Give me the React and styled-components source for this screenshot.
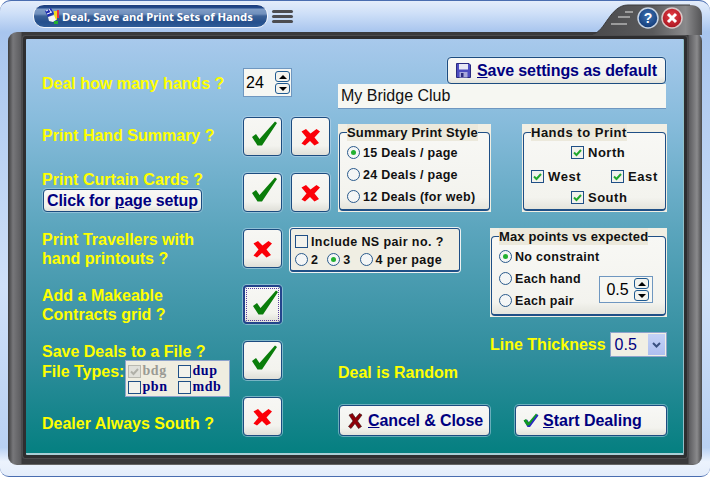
import React from "react";
import styled, { createGlobalStyle } from "styled-components";

const Global = createGlobalStyle`
  html, body { margin: 0; padding: 0; background: #fff; }
  body { font-family: "Liberation Sans", Arial, sans-serif; }
`;

const Win = styled.div`
  position: relative;
  box-sizing: border-box;
  width: 710px;
  height: 477px;
  overflow: hidden;
  border-radius: 11px 11px 9px 9px;
  border-top: 1px solid #4a6db0;
  border-bottom: 1px solid #4a6db0;
  background: linear-gradient(#e4edfb 0, #cfe0f8 12px, #a8c5ee 31px, #cfe0f8 60%, #b9d1f3 94%, #ecf3fd 97%, #e4edfb 100%);
  padding: 0 8px 0 8px;
`;

const TitleBar = styled.div`
  display: flex;
  align-items: flex-start;
  height: 31px;
  padding-left: 25px;
`;

const Pill = styled.div`
  box-sizing: border-box;
  display: flex;
  align-items: center;
  gap: 1px;
  width: 235px;
  height: 24px;
  margin-top: 3px;
  padding: 0 0 0 11px;
  border: 1px solid #f2f6fd;
  border-radius: 11px;
  background: linear-gradient(#1c3c7c 0, #234a8c 3px, #7f9cc6 4px, #6f8fbc 9px, #3c6298 11px, #254f8c 17px, #2f5c98 22px);
`;

const PillText = styled.span`
  font: bold 11.25px "Noto Sans", sans-serif;
  letter-spacing: 0;
  color: #fff;
  white-space: nowrap;
`;

const Grip = styled.div`
  display: flex;
  flex-direction: column;
  gap: 2px;
  width: 21px;
  margin: 9px 0 0 4px;
`;

const GripBar = styled.div`
  height: 3px;
  border-radius: 2px;
  background: #4c4c50;
`;

const Notch = styled.svg`
  position: absolute;
  right: 0;
  top: 0;
`;

const Bezel = styled.div`
  box-sizing: border-box;
  height: 433px;
  padding: 7px 18px 9px 18px;
  border-radius: 9px;
  border-bottom: 1px solid #666;
  background: linear-gradient(90deg, #3c3c3e 0, #77777a 5px, #5c5c5f 13px, #3a3a3c 14px, #3a3a3c 680px, #5c5c5f 681px, #8a8a8c 689px, #4a4a4c 694px);
`;

const Panel = styled.div`
  box-sizing: border-box;
  position: relative;
  height: 416px;
  padding: 18px 0 0 16px;
  box-shadow: 0 0 0 3px #2e2e30, 0 0 0 4px #4c4c4e;
  border-radius: 1px;
  border-bottom: 2px solid #a9cfd6;
  border-right: 1px solid #8fc0c8;
  background: linear-gradient(#a8c9ec 0, #88bcdc 80px, #5ba5bd 190px, #2f8d9c 320px, #047f80 416px);
  display: grid;
  grid-template-columns: 201px 48px 47px 152px 177px;
  grid-template-rows: 60px 56px 56px 56px 56px 56px 39px;
`;

const Cell = styled.div`
  grid-column: ${(p) => p.$col};
  grid-row: ${(p) => p.$row};
  min-width: 0;
  justify-self: ${(p) => p.$justify || "stretch"};
`;

const Label = styled.div`
  font-weight: bold;
  font-size: 16px;
  line-height: ${(p) => p.$lh || 20}px;
  color: #ffff00;
  white-space: nowrap;
  margin-top: ${(p) => p.$top || 0}px;
`;

const Square = styled.button`
  box-sizing: border-box;
  width: 39px;
  height: 39px;
  padding: 0;
  display: block;
  background: linear-gradient(#f7f7f4 0, #f3f3ee 75%, #dfdfd8 100%);
  border: ${(p) => (p.$focus ? "2px solid #24448c" : "1px solid #1c4c80")};
  border-radius: 4px;
  box-shadow: 0 0 0 1px rgba(190, 215, 235, 0.55);
  outline: ${(p) => (p.$focus ? "1px dotted #5a3fa0" : "none")};
  outline-offset: -4px;
`;

const Check = () => (
  <svg width="37" height="37" viewBox="0 0 37 37" style={{ display: "block" }}>
    <path d="M8 19 L12 16 L15.5 21 L31 3.5 L33 5 L18 27.5 L13.5 27.5 Z" fill="#0a7d0a" />
  </svg>
);

const Cross = () => (
  <svg width="37" height="37" viewBox="0 0 37 37" style={{ display: "block" }}>
    <path d="M9.5 13.5 L14 11 L18.5 15.5 L24.5 11 L28 13.5 L22.5 19.5 L27 25 L22.5 27.5 L18 23 L13 27.5 L9.5 25.5 L14.5 19.5 Z" fill="#fb0008" />
  </svg>
);

const Spin = styled.div`
  box-sizing: border-box;
  display: flex;
  align-items: center;
  justify-content: space-between;
  width: ${(p) => p.$w}px;
  height: ${(p) => p.$h}px;
  margin-top: ${(p) => p.$top || 0}px;
  margin-bottom: ${(p) => p.$bottom || 0}px;
  padding: 0 1px 0 ${(p) => p.$pad}px;
  background: #f6f7f3;
  border: 1px solid #6f97c0;
  font-size: 16px;
  color: #000;
`;

const SpinBtns = styled.div`
  display: flex;
  flex-direction: column;
  gap: 1px;
  margin-right: ${(p) => p.$mr || 0}px;
`;

const SpinBtn = styled.div`
  box-sizing: border-box;
  width: 15px;
  height: 11px;
  display: flex;
  align-items: center;
  justify-content: center;
  background: #f3f3ee;
  border: 1px solid #1f5a90;
  border-radius: 3px;
`;

const Tri = styled.div`
  width: 0;
  height: 0;
  border-left: 4px solid transparent;
  border-right: 4px solid transparent;
  ${(p) => (p.$down ? "border-top: 4px solid #000;" : "border-bottom: 4px solid #000;")}
`;

const RightStack = styled.div`
  display: flex;
  flex-direction: column;
  align-items: flex-end;
  padding-right: 1px;
`;

const ActionBtn = styled.button`
  box-sizing: border-box;
  display: flex;
  align-items: center;
  gap: ${(p) => p.$gap || 5}px;
  width: ${(p) => p.$w}px;
  height: ${(p) => p.$h}px;
  padding: 0 0 0 ${(p) => p.$pad || 8}px;
  font: bold 16px "Liberation Sans", sans-serif;
  letter-spacing: ${(p) => p.$ls ?? -0.1}px;
  color: #000080;
  white-space: nowrap;
  background: linear-gradient(#f8f8f6 0, #f3f3ee 75%, #e2e2da 100%);
  border: 1px solid #1c4c80;
  border-radius: 4px;
  box-shadow: 0 0 0 1px rgba(190, 215, 235, 0.5);
  margin: ${(p) => p.$margin || 0};
`;

const U = styled.span`
  text-decoration: underline;
`;

const TextField = styled.div`
  box-sizing: border-box;
  width: 328px;
  height: 25px;
  padding: 0 3px;
  line-height: 24px;
  font-size: 16px;
  background: #f6f7f2;
  border-bottom: 1px solid #6f97c0;
  color: #111;
`;

const GroupWrap = styled.div`
  box-sizing: border-box;
  width: ${(p) => p.$w}px;
  height: ${(p) => p.$h}px;
  margin-top: ${(p) => p.$top || 0}px;
  background: #f1efe4;
  padding: 0 1px 1px 1px;
`;

const Fieldset = styled.fieldset`
  box-sizing: border-box;
  height: 100%;
  min-width: 0;
  margin: 0;
  padding: 0 0 0 7px;
  border: 1px solid #1f4f86;
  border-bottom-width: 2px;
  border-radius: 4px;
  background: linear-gradient(#f8f8f5 0, #f3f3ee 85%, #e4e4dc 100%);
`;

const Legend = styled.legend`
  padding: 0;
  margin-left: 0;
  font: bold 13px/17px "Liberation Sans", sans-serif;
  letter-spacing: ${(p) => p.$ls ?? 0.2}px;
  color: #111;
  background: #ece9dc;
`;

const Opt = styled.div`
  display: flex;
  align-items: center;
  gap: ${(p) => p.$gap || 3}px;
  height: 15px;
  font: bold ${(p) => p.$size || 12.5}px "Liberation Sans", sans-serif;
  letter-spacing: ${(p) => p.$ls ?? 0.3}px;
  color: #111;
  white-space: nowrap;
  grid-column: ${(p) => p.$col || "auto"};
`;

const Radio = styled.span`
  box-sizing: border-box;
  flex: none;
  width: 13px;
  height: 13px;
  display: flex;
  align-items: center;
  justify-content: center;
  border: 1px solid #2a5a8c;
  border-radius: 50%;
  background: #f4f6f6;
  &::after {
    content: "";
    width: 5px;
    height: 5px;
    border-radius: 50%;
    background: ${(p) => (p.$on ? "#22b030" : "transparent")};
  }
`;

const Box = styled.span`
  box-sizing: border-box;
  flex: none;
  display: block;
  width: 13px;
  height: 13px;
  border: 1px solid ${(p) => (p.$gray ? "#b8b8b0" : "#1f4f86")};
  background: ${(p) => (p.$gray ? "#e0e0da" : "#f2f2ec")};
`;

const Tick = ({ color = "#22a82c" }) => (
  <svg width="11" height="11" viewBox="0 0 11 11" style={{ display: "block" }}>
    <path d="M2 5.5 L4.5 8 L9 3" fill="none" stroke={color} strokeWidth="2" />
  </svg>
);

const RadioCol = styled.div`
  display: flex;
  flex-direction: column;
  gap: 7px;
  margin-top: 4px;
`;

const HandsGrid = styled.div`
  display: grid;
  grid-template-columns: 40px 40px 1fr;
  grid-template-rows: 24px 21px 15px;
  margin-top: 4px;
`;

const NsBox = styled.div`
  box-sizing: border-box;
  width: 170px;
  height: 44px;
  margin: -1px 0 0 -1px;
  padding: 5px 0 0 4px;
  background: #f0eee3;
  border: 1px solid #1f4f86;
  border-bottom-width: 2px;
  border-radius: 3px;
  box-shadow: 0 0 0 1px #eef2f2;
  display: flex;
  flex-direction: column;
  gap: 3px;
`;

const NsRow = styled.div`
  display: flex;
  align-items: center;
  gap: 9px;
`;

const RightCol = styled.div`
  display: flex;
  flex-direction: column;
  align-items: flex-start;
`;

const MaxBody = styled.div`
  display: flex;
  justify-content: space-between;
  align-items: flex-end;
  padding-right: 12px;
`;

const LineRow = styled.div`
  display: flex;
  align-items: center;
  gap: 4px;
  margin-top: 15px;
`;

const Combo = styled.div`
  box-sizing: border-box;
  display: flex;
  align-items: center;
  justify-content: space-between;
  width: 57px;
  height: 25px;
  padding: 1px 1px 1px 4px;
  border: 1px solid #8da4cc;
  background: #f1efe4;
  font-size: 16px;
  color: #000080;
`;

const ComboArrow = styled.div`
  width: 17px;
  height: 21px;
  display: flex;
  align-items: center;
  justify-content: center;
  background: linear-gradient(#c4d2f6, #aebff0);
`;

const FileRow = styled.div`
  display: flex;
  align-items: flex-start;
  margin-top: -2px;
`;

const FileBox = styled.div`
  box-sizing: border-box;
  width: 105px;
  height: 37px;
  margin-left: 1px;
  padding: 2px 0 0 2px;
  background: #efede0;
  border: 1px solid #8da4cc;
  display: grid;
  grid-template-columns: 50px 50px;
  grid-auto-rows: 16px;
`;

const FileOpt = styled.div`
  display: flex;
  align-items: center;
  gap: 1px;
  font: bold 14px "Liberation Serif", serif;
  letter-spacing: 0.6px;
  color: ${(p) => (p.$gray ? "#9a9a94" : "#000080")};
`;

const EndCell = styled(Cell)`
  display: flex;
  justify-content: ${(p) => p.$end || "flex-start"};
  align-items: flex-end;
`;

const Floppy = () => (
  <svg width="15" height="15" viewBox="0 0 15 15" style={{ display: "block" }}>
    <path d="M0.5 0.5 H13 L14.5 2 V14.5 H0.5 Z" fill="#4c4cc0" stroke="#2a2a80" />
    <rect x="3" y="1" width="9" height="5.5" fill="#e8e8f4" />
    <rect x="3.5" y="9" width="8" height="5.5" fill="#a8a8dc" />
    <rect x="5" y="10" width="2.5" height="4" fill="#2a2a80" />
  </svg>
);

const SmallCross = () => (
  <svg width="15" height="16" viewBox="0 0 15 16" style={{ display: "block" }}>
    <path d="M1 2 L4.5 0.5 L7.5 5 L11.5 0.5 L14 2 L9.5 8 L13.5 13.5 L10.5 15.5 L7 10.5 L3 15.5 L0.5 13.5 L5 8 Z" fill="#900008" stroke="#301010" strokeWidth="0.6" />
  </svg>
);

const SmallCheck = () => (
  <svg width="16" height="15" viewBox="0 0 16 15" style={{ display: "block" }}>
    <path d="M1 8 L4 6.5 L6.5 10 L14 1 L15.5 2.5 L7 14 L4.5 14 Z" fill="#2a2ac0" />
    <path d="M0.5 7.5 L3 6 L5.5 9.5 L13 0.5 L14 1.5 L6 12.5 L4 12.5 Z" fill="#109a20" />
  </svg>
);

const TitleIcon = () => (
  <svg width="16" height="17" viewBox="0 0 16 17" style={{ display: "block", flex: "none" }}>
    <path d="M0 3 L6 0 L9 6 L3 9 Z" fill="#2030b0" />
    <path d="M1 3 L3 2 M4 1 L6 4 M2 6 L7 4" stroke="#fff" />
    <rect x="9" y="3" width="3" height="9" fill="#f0d820" />
    <rect x="12" y="2" width="2" height="8" fill="#e83048" />
    <path d="M3 9 L9 7 L11 12 L8 14 L4 13 Z" fill="#f4f4f4" />
    <rect x="9" y="13" width="4" height="3" fill="#20b030" />
  </svg>
);

const ChromeControls = () => (
  <Notch width="120" height="34" viewBox="0 0 120 34">
    <defs>
      <linearGradient id="nb" x1="0" y1="0" x2="1" y2="0">
        <stop offset="0" stopColor="#4a4a4c" />
        <stop offset="0.55" stopColor="#5a5a5c" />
        <stop offset="0.85" stopColor="#8a8a8c" />
        <stop offset="1" stopColor="#545456" />
      </linearGradient>
      <radialGradient id="hb" cx="0.5" cy="0.4" r="0.6">
        <stop offset="0" stopColor="#3f74b4" />
        <stop offset="1" stopColor="#123a78" />
      </radialGradient>
      <radialGradient id="cb" cx="0.5" cy="0.4" r="0.6">
        <stop offset="0" stopColor="#e84048" />
        <stop offset="1" stopColor="#a81420" />
      </radialGradient>
    </defs>
    <path d="M3 33 C15 31 20 4 38 4 H100 Q112 4 112 16 V34 H3 Z" fill="url(#nb)" />
    <path d="M3 33 C15 31 20 4 38 4 H100" fill="none" stroke="#3a3a3c" />
    <path d="M21 23 H37 M28 16 H40 M35 11 H43" stroke="#b4b4b4" strokeWidth="1.5" />
    <circle cx="58" cy="17" r="10" fill="url(#hb)" stroke="#c8d4e4" strokeWidth="1.5" />
    <text x="58" y="22" textAnchor="middle" fontFamily="Liberation Sans" fontWeight="bold" fontSize="14" fill="#fff">?</text>
    <circle cx="82" cy="17" r="10" fill="url(#cb)" stroke="#d8c8c8" strokeWidth="1.5" />
    <path d="M78 13 L86 21 M86 13 L78 21" stroke="#fff" strokeWidth="3" />
  </Notch>
);

const Arrow = () => (
  <svg width="9" height="6" viewBox="0 0 9 6" style={{ display: "block" }}>
    <path d="M1 1 L4.5 4.5 L8 1" fill="none" stroke="#3a5080" strokeWidth="2" />
  </svg>
);

const SpinButtons = ({ mr }) => (
  <SpinBtns $mr={mr}>
    <SpinBtn><Tri /></SpinBtn>
    <SpinBtn><Tri $down /></SpinBtn>
  </SpinBtns>
);

export default function App() {
  return (
    <Win>
      <Global />
      <TitleBar>
        <Pill>
          <TitleIcon />
          <PillText>Deal, Save and Print Sets of Hands</PillText>
        </Pill>
        <Grip>
          <GripBar />
          <GripBar />
          <GripBar />
        </Grip>
      </TitleBar>
      <ChromeControls />
      <Bezel>
        <Panel>
          <Cell $col="1" $row="1"><Label $top={17}>Deal how many hands ?</Label></Cell>
          <Cell $col="2 / 4" $row="1">
            <Spin $w={49} $h={29} $top={11} $pad={2}>24<SpinButtons /></Spin>
          </Cell>
          <Cell $col="4 / 6" $row="1">
            <RightStack>
              <ActionBtn $w={219} $h={27} $pad={8} $gap={6}>
                <Floppy /><span><U>S</U>ave settings as default</span>
              </ActionBtn>
              <TextField>My Bridge Club</TextField>
            </RightStack>
          </Cell>

          <Cell $col="1" $row="2"><Label $top={9}>Print Hand Summary ?</Label></Cell>
          <Cell $col="2" $row="2"><Square><Check /></Square></Cell>
          <Cell $col="3" $row="2"><Square><Cross /></Square></Cell>
          <Cell $col="4" $row="2 / 4">
            <GroupWrap $w={153} $h={88} $top={7}>
              <Fieldset>
                <Legend>Summary Print Style</Legend>
                <RadioCol>
                  <Opt><Radio $on />15 Deals / page</Opt>
                  <Opt><Radio />24 Deals / page</Opt>
                  <Opt><Radio />12 Deals (for web)</Opt>
                </RadioCol>
              </Fieldset>
            </GroupWrap>
          </Cell>
          <Cell $col="5" $row="2 / 4" $justify="end">
            <GroupWrap $w={145} $h={88} $top={7}>
              <Fieldset>
                <Legend $ls={0.5}>Hands to Print</Legend>
                <HandsGrid>
                  <Opt $col="2 / 4" $gap={4} $size={13} $ls={0.5}><Box><Tick /></Box>North</Opt>
                  <Opt $col="1 / 3" $gap={4} $size={13} $ls={0.6}><Box><Tick /></Box>West</Opt>
                  <Opt $col="3" $gap={4} $size={13} $ls={0.6}><Box><Tick /></Box>East</Opt>
                  <Opt $col="2 / 4" $gap={4} $size={13} $ls={0.5}><Box><Tick /></Box>South</Opt>
                </HandsGrid>
              </Fieldset>
            </GroupWrap>
          </Cell>

          <Cell $col="1" $row="3">
            <Label style={{ marginTop: -3 }}>Print Curtain Cards ?</Label>
            <ActionBtn $w={159} $h={23} $pad={3} $margin="-1px 0 0 1px">
              <span>Click for <U>p</U>age setup</span>
            </ActionBtn>
          </Cell>
          <Cell $col="2" $row="3"><Square><Check /></Square></Cell>
          <Cell $col="3" $row="3"><Square><Cross /></Square></Cell>

          <Cell $col="1" $row="4"><Label $lh={19} $top={1}>Print Travellers with<br />hand printouts ?</Label></Cell>
          <Cell $col="2" $row="4"><Square><Cross /></Square></Cell>
          <Cell $col="3 / 5" $row="4">
            <NsBox>
              <Opt $gap={3} $ls={0.4}><Box />Include NS pair no. ?</Opt>
              <NsRow>
                <Opt><Radio />2</Opt>
                <Opt><Radio $on />3</Opt>
                <Opt $ls={0.4}><Radio />4 per page</Opt>
              </NsRow>
            </NsBox>
          </Cell>
          <Cell $col="5" $row="4 / 7">
            <RightCol>
              <GroupWrap $w={177} $h={89} $top={-1}>
                <Fieldset>
                  <Legend $ls={0.15}>Max points vs expected</Legend>
                  <MaxBody>
                    <RadioCol>
                      <Opt><Radio $on />No constraint</Opt>
                      <Opt><Radio />Each hand</Opt>
                      <Opt><Radio />Each pair</Opt>
                    </RadioCol>
                    <Spin $w={54} $h={27} $pad={6} $bottom={5}>0.5<SpinButtons mr={2} /></Spin>
                  </MaxBody>
                </Fieldset>
              </GroupWrap>
              <LineRow>
                <Label>Line Thickness</Label>
                <Combo>0.5<ComboArrow><Arrow /></ComboArrow></Combo>
              </LineRow>
            </RightCol>
          </Cell>

          <Cell $col="1" $row="5"><Label $lh={19} $top={1}>Add a Makeable<br />Contracts grid ?</Label></Cell>
          <Cell $col="2" $row="5"><Square $focus><Check /></Square></Cell>

          <Cell $col="1" $row="6">
            <Label $top={1}>Save Deals to a File ?</Label>
            <FileRow>
              <Label $top={2}>File Types:</Label>
              <FileBox>
                <FileOpt $gray><Box $gray><Tick color="#b0b0a8" /></Box>bdg</FileOpt>
                <FileOpt><Box />dup</FileOpt>
                <FileOpt><Box />pbn</FileOpt>
                <FileOpt><Box />mdb</FileOpt>
              </FileBox>
            </FileRow>
          </Cell>
          <Cell $col="2" $row="6"><Square><Check /></Square></Cell>
          <Cell $col="4" $row="6"><Label $top={22}>Deal is Random</Label></Cell>

          <Cell $col="1" $row="7"><Label $top={17}>Dealer Always South ?</Label></Cell>
          <Cell $col="2" $row="7"><Square><Cross /></Square></Cell>
          <EndCell $col="4" $row="7" $end="flex-end">
            <ActionBtn $w={151} $h={31} $pad={8} $gap={5}>
              <SmallCross /><span><U>C</U>ancel &amp; Close</span>
            </ActionBtn>
          </EndCell>
          <EndCell $col="5" $row="7" $end="flex-end">
            <ActionBtn $w={152} $h={31} $pad={7} $gap={4} $ls={0}>
              <SmallCheck /><span><U>S</U>tart Dealing</span>
            </ActionBtn>
          </EndCell>
        </Panel>
      </Bezel>
    </Win>
  );
}
